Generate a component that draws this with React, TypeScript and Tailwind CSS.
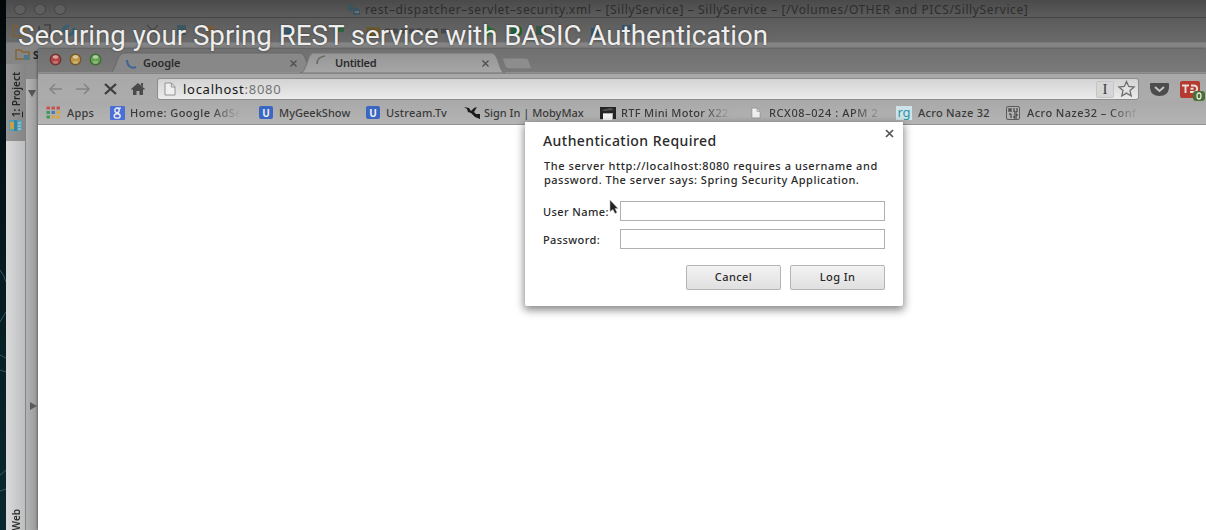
import React from "react";

const ui = "font-['Noto_Sans',sans-serif]";

function TrafficLight({ fill, ring }: { fill: string; ring: string }) {
  return (
    <svg width="13" height="13" viewBox="0 0 13 13">
      <circle cx="6.5" cy="6.5" r="5.3" fill={fill} stroke={ring} strokeWidth="1.2" />
      <ellipse cx="6.5" cy="4" rx="2.8" ry="1.7" fill="#fff" opacity=".5" />
      <ellipse cx="6.5" cy="9.3" rx="2.8" ry="1.5" fill="#fff" opacity=".25" />
    </svg>
  );
}

function Page({ className = "" }: { className?: string }) {
  return (
    <svg className={className} width="12" height="14" viewBox="0 0 12 14">
      <path d="M1 1h6.5L11 4.800V13H1z" fill="#efefef" stroke="#929292" />
      <path d="M7.300 1v4H11" fill="none" stroke="#929292" />
    </svg>
  );
}

function UIcon() {
  return (
    <span className="flex h-[13px] w-[14px] items-center justify-center rounded-[2px] bg-[#3a66c4] text-[10px] font-bold leading-none text-[#eee]">
      U
    </span>
  );
}

function Bookmark({ icon, children, className, textClass }: { icon: React.ReactNode; children: React.ReactNode; className: string; textClass: string }) {
  return (
    <div className={`flex h-full shrink-0 items-center whitespace-nowrap ${className}`}>
      <span className="flex w-[21px] shrink-0 items-center">{icon}</span>
      <span className={`text-[11px] font-medium leading-[14px] text-[#3a3a3a] ${textClass}`}>{children}</span>
    </div>
  );
}

function BookmarksBar() {
  const fade = "[mask-image:linear-gradient(90deg,#000_72%,transparent_99%)]";
  return (
    <div className="flex h-[24px] shrink-0 items-center border-b border-[#929292] bg-linear-to-b from-[#a9a9a9] to-[#b4b4b4] pl-[8px]">
      <Bookmark
        className="w-[64px]"
        textClass="tracking-[0.2px]"
        icon={
          <svg width="15" height="13" viewBox="0 0 15 13">
            {["#c8504a", "#c8504a", "#c8504a", "#3b9c55", "#4978b8", "#d8a73c", "#3b9c55", "#d8a73c", "#d8a73c"].map((c, i) => (
              <rect key={i} x={(i % 3) * 5 + 0.5} y={Math.floor(i / 3) * 4.5 + 0.5} width="3.4" height="3" fill={c} />
            ))}
          </svg>
        }
      >
        Apps
      </Bookmark>
      <Bookmark
        className="w-[149px]"
        textClass={`ml-[-1px] w-[112px] tracking-[0.45px] ${fade}`}
        icon={
          <span className="flex h-[14px] w-[15px] items-center justify-center rounded-[1px] bg-[#4a6fd6]">
            <svg width="9" height="12" viewBox="0 0 9 12">
              <ellipse cx="4" cy="3.300" rx="2.200" ry="2.300" stroke="#eee" strokeWidth="1.400" fill="none" />
              <ellipse cx="4.200" cy="8.900" rx="3" ry="2.200" stroke="#eee" strokeWidth="1.400" fill="none" />
              <path d="M5 1.200h3M4.500 5.500l1.500 1.500" stroke="#eee" strokeWidth="1.300" />
            </svg>
          </span>
        }
      >
        Home: Google AdSe
      </Bookmark>
      <Bookmark className="w-[107px]" textClass="ml-[-1px] tracking-[0.03px]" icon={<UIcon />}>MyGeekShow</Bookmark>
      <Bookmark className="w-[98px]" textClass="ml-[-1px] tracking-[0.2px]" icon={<UIcon />}>Ustream.Tv</Bookmark>
      <Bookmark
        className="w-[136px]"
        textClass="ml-[-1px] tracking-[0px]"
        icon={
          <svg width="17" height="13" viewBox="0 0 17 13">
            <path d="M0 1l5 1 2 3 3-3 3-1-3 5 2 2h4v5l-5-2-4-4-3-1-1-3z" fill="#1c1c1c" />
          </svg>
        }
      >
        Sign In | MobyMax
      </Bookmark>
      <Bookmark
        className="w-[149px]"
        textClass={`w-[112px] tracking-[0.3px] ${fade}`}
        icon={
          <svg width="16" height="14" viewBox="0 0 16 14">
            <path d="M0 1h16v12h-3V7H3v6H0z" fill="#252525" />
            <rect x="3" y="8" width="9" height="6" fill="#f3f3f3" />
            <path d="M2 4l9-2 3 2-10 1z" fill="#555" />
          </svg>
        }
      >
        RTF Mini Motor X22:
      </Bookmark>
      <Bookmark className="w-[147px]" textClass={`ml-[-1px] w-[116px] tracking-[0.58px] ${fade}`} icon={<Page className="ml-[2px] h-[12px] w-[10px]" />}>
        RCX08–024 : APM 2
      </Bookmark>
      <Bookmark
        className="w-[110px]"
        textClass="ml-[1px] tracking-[0.28px]"
        icon={<span className="flex h-[14px] w-[16px] items-center justify-center bg-[#cfe3e8] text-[13px] leading-none text-[#2b96aa]">rg</span>}
      >
        Acro Naze 32
      </Bookmark>
      <Bookmark
        className="w-[140px]"
        textClass={`w-[113px] tracking-[0.45px] ${fade}`}
        icon={
          <svg width="14" height="14" viewBox="0 0 14 14">
            <rect x=".5" y=".5" width="13" height="13" rx="1.5" fill="#b0b0b0" stroke="#5b5b5b" />
            <path d="M3 2v4M5 2v4M3 4h2M8 2v4h3V2M3 8h2v4M8 8h3v2H8v2h3" stroke="#333" fill="none" />
          </svg>
        }
      >
        Acro Naze32 – Conf
      </Bookmark>
    </div>
  );
}

function TabStrip() {
  return (
    <div className="relative h-[24px] shrink-0 bg-linear-to-b from-[#707070] to-[#7a7a7a]">
      <svg className="absolute inset-0" width="1168" height="24" viewBox="0 0 1168 24">
        <defs>
          <linearGradient id="active" x1="0" y1="0" x2="0" y2="1">
            <stop offset="0" stopColor="#969696" />
            <stop offset="1" stopColor="#a6a6a6" />
          </linearGradient>
        </defs>
        <path d="M72 24c5 0 7-19 13-20h178c6 1 6 20 14 20z" fill="#888" stroke="#666" />
        <path d="M262 24c7 0 7-19 13-20h179c7 1 7 20 13 20z" fill="url(#active)" stroke="#757575" />
        <path d="M464 9h24q2 0 3 3l3 8h-23q-3 0-4-3z" fill="#8d8d8d" stroke="#757575" />
        <path d="M0 23.5h262M467 23.5h701" stroke="#8f8f8f" />
      </svg>
      <div className="relative flex h-full items-center pl-[11px]">
        <div className="flex w-[77px] gap-[7px] pb-[4px]">
          <TrafficLight fill="#b04444" ring="#6b3434" />
          <TrafficLight fill="#bd9444" ring="#705829" />
          <TrafficLight fill="#66a050" ring="#3c6a34" />
        </div>
        <svg className="mt-[5px]" width="13" height="13" viewBox="0 0 13 13"><path d="M1 3c0 6 4 9 9 7" stroke="#3d6596" strokeWidth="2" fill="none" /></svg>
        <span className="ml-[4px] w-[147px] pt-[4px] text-[11px] font-semibold leading-[14px] tracking-[-0.1px] text-[#2b2b2b]">Google</span>
        <svg className="mt-[4px]" width="7" height="7" viewBox="0 0 7 7"><path d="M.5.5l6 6M6.500.5l-6 6" stroke="#4c4c4c" strokeWidth="1.2" /></svg>
        <svg className="ml-[18px] mt-[2px]" width="14" height="14" viewBox="0 0 14 14"><path d="M2 9Q2 2 10 1" stroke="#696969" strokeWidth="1.500" fill="none" /></svg>
        <span className="ml-[6px] w-[147px] pt-[4px] text-[11px] font-semibold leading-[14px] tracking-[-0.3px] text-[#2b2b2b]">Untitled</span>
        <svg className="mt-[4px]" width="7" height="7" viewBox="0 0 7 7"><path d="M.5.5l6 6M6.500.5l-6 6" stroke="#4c4c4c" strokeWidth="1.2" /></svg>
      </div>
    </div>
  );
}

function Toolbar() {
  return (
    <div className="flex h-[28px] shrink-0 items-center border-t border-[#858585] bg-linear-to-b from-[#a8a8a8] to-[#acacac] pl-[10px] pt-[3px]">
      <svg width="15" height="12" viewBox="0 0 15 12"><path d="M14 6H2M7 1L2 6l5 5" stroke="#858585" strokeWidth="1.6" fill="none" /></svg>
      <svg className="ml-[13px]" width="15" height="12" viewBox="0 0 15 12"><path d="M0 6h13M8 1l5 5-5 5" stroke="#858585" strokeWidth="1.6" fill="none" /></svg>
      <svg className="ml-[13px]" width="13" height="12" viewBox="0 0 13 12"><path d="M1 1l11 10M12 1L1 11" stroke="#3d3d3d" strokeWidth="2.3" /></svg>
      <svg className="ml-[14px]" width="14" height="14" viewBox="0 0 14 14"><path d="M7 1l7 6-1 1-1-1v6H8.500V9h-3v4H2V7L1 8 0 7zM10 1h2v4l-2-2z" fill="#4a4a4a" /></svg>
      <div className="ml-[12px] flex h-[22px] w-[983px] items-center rounded-[3px] border border-[#8c8c8c] bg-linear-to-b from-[#d3d3d3] to-[#ebebeb] pl-[6px] pr-[2px]">
        <Page />
        <span className="ml-[7px] flex-1 text-[13px] leading-[18px] tracking-[0.74px] text-[#747474]">
          <span className="text-[#161616]">localhost</span>:8080
        </span>
        <span className="mr-[3px] flex h-[17px] w-[18px] items-center justify-center rounded-[2px] border border-[#c5c5c5] bg-[#d6d6d6] font-['Liberation_Serif',serif] text-[15px] leading-none text-[#3c3c3c]">I</span>
        <svg width="19" height="18" viewBox="0 0 19 18"><path d="M9.500 1.500l2.200 5 5.400.5-4.100 3.600 1.200 5.400-4.700-2.900L4.800 16 6 10.600 1.900 7l5.400-.5z" fill="#e2e2e2" stroke="#707070" strokeWidth="1.300" /></svg>
      </div>
      <svg className="ml-[11px] shrink-0" width="19" height="15" viewBox="0 0 19 15"><path d="M1 1h17q1 0 1 1v4q-1 8-9.500 8T0 6V2q0-1 1-1z" fill="#4c4c4c" /><path d="M5 5l4.500 4L14 5" stroke="#c4c4c4" strokeWidth="2" fill="none" /></svg>
      <svg className="ml-[11px] mt-[2px] shrink-0" width="26" height="23" viewBox="0 0 26 23">
        <rect x="0" y="2" width="20" height="17" rx="2" fill="#b53a2f" />
        <path d="M2 6.500h7M5.500 6.500V14M11 6.500h2c5.500 0 5.500 6.500 0 6.500h-3M10.500 9.800h3" stroke="#e6e0de" strokeWidth="1.900" fill="none" />
        <rect x="13" y="12" width="12" height="10" rx="3" fill="#4a7034" />
        <ellipse cx="19" cy="17" rx="2" ry="3" fill="none" stroke="#e5e5e5" strokeWidth="1.3" />
      </svg>
    </div>
  );
}

function AuthDialog() {
  const button =
    "h-[25px] w-[95px] rounded-[2px] border border-[#b4b4b4] bg-linear-to-b from-[#f3f3f3] to-[#e0e0e0] text-[11px] font-medium tracking-[0.4px]";
  return (
    <div className="absolute left-[487px] top-[73px] flex h-[184px] w-[378px] flex-col rounded-b-[2px] bg-white pl-[18px] pr-[18px] pt-[10px] text-[#2a2a2a] shadow-[0_3px_9px_1px_rgba(0,0,0,0.48)]">
      <svg className="absolute right-[9px] top-[7px]" width="9" height="9" viewBox="0 0 9 9"><path d="M1 1l7 7M8 1L1 8" stroke="#555" strokeWidth="1.700" /></svg>
      <h1 className="text-[14px] font-medium leading-[18px] tracking-[0.44px]">Authentication Required</h1>
      <p className="ml-[1px] mt-[9px] whitespace-nowrap text-[11px] font-medium leading-[14px]">
        <span className="tracking-[0.57px]">The server http://localhost:8080 requires a username and</span>
        <br />
        <span className="tracking-[0.5px]">password. The server says: Spring Security Application.</span>
      </p>
      <label className="mt-[14px] flex h-[20px] items-center text-[11px] font-medium tracking-[0.4px]">
        <span className="w-[77px] pt-[2px]">User Name:</span>
        <input className="h-[20px] w-[265px] border border-[#b0b0b0] bg-white outline-none" />
      </label>
      <label className="mt-[8px] flex h-[20px] items-center text-[11px] font-medium tracking-[0.4px]">
        <span className="w-[77px] pt-[2px]">Password:</span>
        <input type="password" className="h-[20px] w-[265px] border border-[#b0b0b0] bg-white outline-none" />
      </label>
      <div className="mt-[16px] flex justify-end gap-[9px]">
        <button className={button}>Cancel</button>
        <button className={button}>Log In</button>
      </div>
      <svg className="absolute left-[84px] top-[77px]" width="11" height="17" viewBox="0 0 11 17"><path d="M1 1l8 8.500H6l2 4-2 1-2-4-3 2z" fill="#222" stroke="#bbb" strokeWidth=".6" /></svg>
    </div>
  );
}

function BrowserWindow() {
  return (
    <div className="absolute left-[38px] top-[49px] flex h-[481px] w-[1168px] flex-col bg-white shadow-[0_0_3px_rgba(0,0,0,.6)]">
      <TabStrip />
      <Toolbar />
      <BookmarksBar />
      <AuthDialog />
    </div>
  );
}

function EditorToolbar() {
  return (
    <div className="h-[25px] shrink-0 border-b border-[#7a7a7a] bg-linear-to-b from-[#5b5b5b] to-[#6a6a6a]">
      <svg width="720" height="24" viewBox="0 0 720 24">
        <path d="M7 8h5l1 2h6v8H7z" fill="none" stroke="#75603e" strokeWidth="2" />
        <path d="M33 8v10M38 7h6v11h-6" fill="none" stroke="#484848" strokeWidth="2" />
        <path d="M57 14q0-6 6-6M68 10q0 7-7 7" fill="none" stroke="#365f73" strokeWidth="3" />
        <path d="M141 7l11 11M152 7l-11 11" stroke="#484848" strokeWidth="1.500" />
        <rect x="171" y="7" width="9" height="10" fill="#3d5661" />
        <rect x="201" y="8" width="8" height="10" fill="#755c3d" />
        <circle cx="282" cy="13" r="5" fill="#37586b" />
        <rect x="332" y="7" width="6" height="7" fill="#2d6440" />
        <path d="M360 9h14v9h-14z" fill="#69572f" />
        <path d="M379 13h64" stroke="#484848" strokeWidth="5" strokeDasharray="5 3" />
        <path d="M481 7l9 6-9 6z" fill="#24703a" />
        <rect x="505" y="8" width="11" height="10" rx="4" fill="#24623a" />
        <path d="M530 8h10v9h-10z" fill="#365844" />
        <path d="M558 7h11l-5 5z" fill="#6e523b" />
        <path d="M585 10h8v8h-8z" fill="#3a525e" />
        <rect x="616" y="7" width="9" height="8" fill="#36556b" />
      </svg>
    </div>
  );
}

function EditorWindow() {
  return (
    <div className="ml-[6px] flex h-[530px] flex-col rounded-tl-[4px] bg-[#6d6d6d]">
      <div className="flex h-[18px] shrink-0 items-center border-b border-[#454545] bg-linear-to-b from-[#4a4a4a] to-[#5c5c5c] pl-[8px]">
        <div className="mt-[2px] flex w-[332px] gap-[8px]">
          {[0, 1, 2].map((i) => (
            <span key={i} className="h-[11px] w-[12px] rounded-full border border-[#444] bg-[#5e5e5e]" />
          ))}
        </div>
        <svg className="mt-[2px]" width="15" height="13" viewBox="0 0 15 13"><path d="M1 3l3-2 4 3-1 4H2zM7 5h5l2 2v5H7z" fill="#3c545e" /><path d="M9 8h4v2H9z" fill="#667176" /></svg>
        <span className="ml-[4px] mt-[2px] whitespace-nowrap text-[12px] leading-[16px] tracking-[0.61px] text-[#2d2d2d]">
          rest–dispatcher–servlet–security.xml – [SillyService] – SillyService – [/Volumes/OTHER and PICS/SillyService]
        </span>
      </div>
      <EditorToolbar />
      <div className="flex h-[21px] shrink-0 items-center bg-[#858585] pl-[9px]">
        <svg width="15" height="12" viewBox="0 0 15 12"><path d="M1 2h5l1 2h7v7H1z" fill="none" stroke="#866633" strokeWidth="1.500" /><rect x="9" y="7" width="5" height="5" fill="#4a7a92" /></svg>
        <span className="ml-[3px] mt-[3px] text-[10px] font-bold leading-[12px] text-[#222]">S</span>
      </div>
      <div className="flex flex-1">
        <div className="flex w-[20px] flex-col justify-between border-r border-[#858585] bg-linear-to-r from-[#dadada] to-[#bcbec0]">
          <div className="flex h-[77px] w-full flex-col items-center bg-linear-to-r from-[#979797] to-[#868686] pt-[8px]">
            <span className="rotate-180 whitespace-nowrap text-[10px] font-semibold leading-[14px] text-[#262626] [writing-mode:vertical-rl]"><u>1</u>: Project</span>
            <svg className="mt-[3px]" width="13" height="11" viewBox="0 0 13 11"><path d="M0 0h13v11H0z" fill="#5a9cb4" /><path d="M1 2h4v7H1z" fill="#c9a044" /><path d="M5 0h3v11H5z" fill="#3384a5" /><path d="M9 3h3M9 6h3M9 9h3" stroke="#c0d4da" /></svg>
          </div>
          <span className="rotate-180 self-center text-[10px] font-semibold leading-[14px] text-[#2c2c2c] [writing-mode:vertical-rl]">Web</span>
        </div>
        <div className="w-[12px] bg-linear-to-r from-[#b4b4b4] to-[#999]">
          <div className="h-[15px] bg-[#888]" />
          <svg className="mt-[10px]" width="12" height="10" viewBox="0 0 12 10"><path d="M2 1h8L6 8z" fill="#555" /></svg>
          <svg className="mt-[302px]" width="12" height="10" viewBox="0 0 12 10"><path d="M4 1v8l7-4z" fill="#5b5b5b" /></svg>
        </div>
      </div>
    </div>
  );
}

export default function App() {
  return (
    <main className={`relative h-[530px] w-[1206px] overflow-hidden bg-linear-to-b from-[#020708] via-[#071b20] to-[#09282f] ${ui}`}>
      <svg className="absolute left-0 top-0" width="6" height="530" viewBox="0 0 6 530">
        <path d="M0 270q4 5 6 12M0 322l6-10M0 355l6 3M0 370l6 2M0 475l6-5M0 491l6-2" stroke="#2f5960" fill="none" />
      </svg>
      <EditorWindow />
      <BrowserWindow />
      <div className="absolute left-[18px] top-[20px] whitespace-nowrap font-['Roboto',sans-serif] text-[27.7px] leading-[32px] text-[#eee] [text-shadow:0_0_2px_rgba(0,0,0,.5)]">
        Securing your Spring REST service with BASIC Authentication
      </div>
    </main>
  );
}
